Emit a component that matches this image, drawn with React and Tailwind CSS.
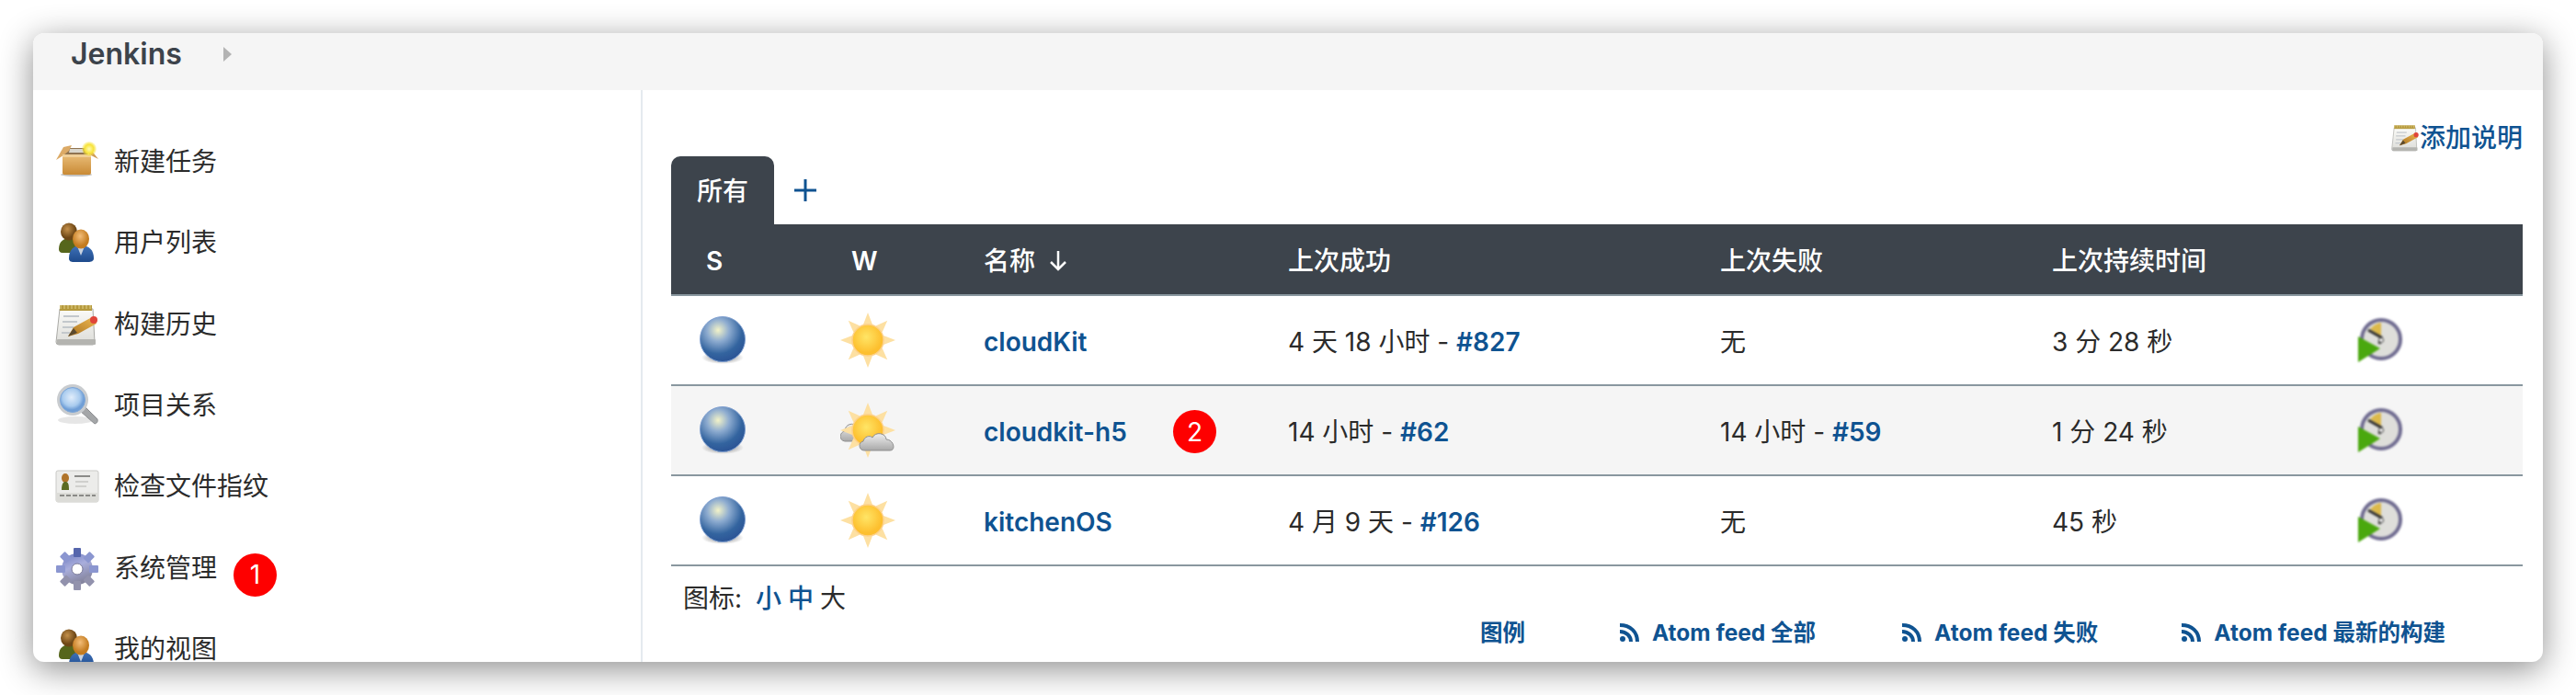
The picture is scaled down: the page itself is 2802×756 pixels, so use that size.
import React from 'react';

const sideItems = [
	{ label: '新建任务', icon: 'box' },
	{ label: '用户列表', icon: 'users' },
	{ label: '构建历史', icon: 'note' },
	{ label: '项目关系', icon: 'search' },
	{ label: '检查文件指纹', icon: 'card' },
	{ label: '系统管理', icon: 'gear', badge: '1' },
	{ label: '我的视图', icon: 'users' },
];

const jobs = [
	{ name: 'cloudKit', weather: 'sun', ok: '4 天 18 小时 - ', okNo: '#827', fail: '无', time: '3 分 28 秒' },
	{ name: 'cloudkit-h5', weather: 'cloud', badge: '2', ok: '14 小时 - ', okNo: '#62', fail: '14 小时 - ', failNo: '#59', time: '1 分 24 秒' },
	{ name: 'kitchenOS', weather: 'sun', ok: '4 月 9 天 - ', okNo: '#126', fail: '无', time: '45 秒' },
];

const BoxIcon = () => (
	<svg viewBox="0 0 48 48" className="w-12 h-12 blur-[0.5px]">
		<defs>
			<linearGradient id="boxFront" x1="0" y1="0" x2="0" y2="1">
				<stop offset="0" stopColor="#e9bd78" />
				<stop offset="1" stopColor="#c98a35" />
			</linearGradient>
			<radialGradient id="boxStar">
				<stop offset="0" stopColor="#fffbb0" />
				<stop offset="0.6" stopColor="#f7e33a" />
				<stop offset="1" stopColor="#f7e33a" stopOpacity="0.2" />
			</radialGradient>
		</defs>
		<ellipse cx="23" cy="37" rx="17" ry="2" fill="#c4c4c4" />
		<path d="M10 8 H34 L36 16 H9 Z" fill="#8f7350" />
		<path d="M16 9 H30 L31 13 H15 Z" fill="#d9d6cc" />
		<path d="M9 7 L18 5 L15 11 L9 16 L1 21 Z" fill="#dcaa66" />
		<path d="M34 7 L38 9 L47 20 L37 15 Z" fill="#cf9c58" />
		<rect x="8" y="15" width="31" height="22" rx="2" fill="url(#boxFront)" />
		<rect x="8" y="15" width="31" height="3" fill="#f0cf98" />
		<circle cx="37" cy="9" r="8" fill="url(#boxStar)" />
	</svg>
);

const UsersIcon = () => (
	<svg viewBox="0 0 48 48" className="w-12 h-12 blur-[0.5px]">
		<defs>
			<radialGradient id="headBrown" cx="0.4" cy="0.35">
				<stop offset="0" stopColor="#c4904a" />
				<stop offset="1" stopColor="#6e4716" />
			</radialGradient>
			<radialGradient id="headOrange" cx="0.45" cy="0.35">
				<stop offset="0" stopColor="#f3bd78" />
				<stop offset="1" stopColor="#c47c20" />
			</radialGradient>
			<linearGradient id="bodyBlue" x1="0" y1="0" x2="0" y2="1">
				<stop offset="0" stopColor="#3f72b8" />
				<stop offset="1" stopColor="#1e4a8c" />
			</linearGradient>
		</defs>
		<path d="M4 30 C4 21 10 18 16 18 C24 18 27 24 27 34 H8 C5 34 4 32 4 30 Z" fill="#56661c" />
		<ellipse cx="15" cy="11" rx="9" ry="9.5" fill="url(#headBrown)" />
		<path d="M15 40 C15 30 21 26 28 26 C37 26 42 31 42 40 C42 43 39 44 36 44 H20 C17 44 15 43 15 40 Z" fill="url(#bodyBlue)" />
		<path d="M24 27 L28 37 L32 27 Z" fill="#c9d3e0" />
		<ellipse cx="28" cy="19" rx="9" ry="10.5" fill="url(#headOrange)" />
	</svg>
);

const NoteIcon = ({ size = 'w-12 h-12' }) => (
	<svg viewBox="0 0 48 48" className={`${size} shrink-0 blur-[0.5px]`}>
		<defs>
			<linearGradient id="notePage" x1="0" y1="0" x2="0" y2="1">
				<stop offset="0" stopColor="#fbfbf8" />
				<stop offset="1" stopColor="#dcdcd8" />
			</linearGradient>
			<linearGradient id="pencilBody" x1="0" y1="1" x2="1" y2="0">
				<stop offset="0" stopColor="#a8701e" />
				<stop offset="1" stopColor="#eeb850" />
			</linearGradient>
		</defs>
		<path d="M5 6 H41 L43 42 Q43 45 41 45 H4 Q1 45 1 42 Z" fill="url(#notePage)" stroke="#a9a9a5" strokeWidth="1" />
		<rect x="2" y="39" width="42" height="6" rx="1" fill="#b4b4b0" />
		<rect x="5" y="2" width="35" height="6" fill="#b69a3e" />
		<path d="M6 2 V6 M10 2 V6 M14 2 V6 M18 2 V6 M22 2 V6 M26 2 V6 M30 2 V6 M34 2 V6 M38 2 V6" stroke="#e1d188" strokeWidth="1" />
		<path d="M9 14 H26 M8 20 H24 M8 26 H20 M7 32 H16" stroke="#c3c8cc" strokeWidth="2" />
		<path d="M14 36 L20 26 L40 15 L45 22 L25 33 Z" fill="url(#pencilBody)" />
		<path d="M14 36 L20 27 L24 32 Z" fill="#5a4a30" />
		<circle cx="42" cy="18" r="4" fill="#e0453a" />
	</svg>
);

const SearchIcon = () => (
	<svg viewBox="0 0 48 48" className="w-12 h-12 blur-[0.5px]">
		<defs>
			<radialGradient id="lens" cx="0.45" cy="0.4">
				<stop offset="0" stopColor="#e1edfb" />
				<stop offset="0.7" stopColor="#a9cbee" />
				<stop offset="1" stopColor="#6f9ed6" />
			</radialGradient>
		</defs>
		<ellipse cx="22" cy="39" rx="19" ry="4" fill="#e6e6e6" />
		<path d="M27 29 L33 25 L46 38 Q47 42 43 43 Z" fill="#a4a6a8" stroke="#8b8d90" strokeWidth="1" />
		<circle cx="19" cy="17" r="17" fill="#c9cccf" />
		<circle cx="19" cy="17" r="13.5" fill="url(#lens)" stroke="#7da6d8" strokeWidth="1" />
	</svg>
);

const CardIcon = () => (
	<svg viewBox="0 0 48 48" className="w-12 h-12 blur-[0.6px]">
		<rect x="1" y="6" width="46" height="34" rx="2" fill="#ececea" stroke="#c9c9c6" strokeWidth="1" />
		<rect x="1" y="30" width="46" height="10" fill="#dcdcd8" />
		<ellipse cx="11" cy="14" rx="4" ry="5" fill="#b0742a" />
		<path d="M7 27 C7 20 9 18 11 18 C14 18 15 20 15 27 Z" fill="#5c6b22" />
		<path d="M21 12 H38" stroke="#8b8b88" strokeWidth="2" />
		<path d="M22 18 H36 M22 23 H34" stroke="#d0d0cd" strokeWidth="2" />
		<path d="M5 33 H44" stroke="#8a8a87" strokeWidth="2" strokeDasharray="5 2" />
	</svg>
);

const GearIcon = () => (
	<svg viewBox="0 0 48 48" className="w-12 h-12 blur-[0.6px]">
		<defs>
			<linearGradient id="gearFill" x1="0" y1="0" x2="0.4" y2="1">
				<stop offset="0" stopColor="#6f7cc0" />
				<stop offset="0.5" stopColor="#a9aedc" />
				<stop offset="1" stopColor="#85859f" />
			</linearGradient>
		</defs>
		<circle cx="24" cy="24" r="17" fill="url(#gearFill)" />
		{[0, 45, 90, 135, 180, 225, 270, 315].map((a) => (
			<rect key={a} x="20" y="1" width="8" height="10" rx="1" fill={a === 0 ? '#5565ac' : a > 90 && a < 270 ? '#9292ad' : '#8b96d0'} transform={`rotate(${a} 24 24)`} />
		))}
		<circle cx="24" cy="24" r="6" fill="#fff" stroke="#7a7a98" strokeWidth="1" />
	</svg>
);

const Ball = () => (
	<svg viewBox="0 0 52 52" className="w-[52px] h-[52px] blur-[0.5px]">
		<defs>
			<radialGradient id="ballFill" cx="0.4" cy="0.3" r="0.7">
				<stop offset="0" stopColor="#f3f3c8" />
				<stop offset="0.35" stopColor="#8eacd0" />
				<stop offset="0.75" stopColor="#33649f" />
				<stop offset="1" stopColor="#2c5596" />
			</radialGradient>
			<radialGradient id="ballShade">
				<stop offset="0" stopColor="#777" />
				<stop offset="1" stopColor="#777" stopOpacity="0" />
			</radialGradient>
		</defs>
		<ellipse cx="26" cy="45" rx="23" ry="7" fill="url(#ballShade)" />
		<circle cx="26" cy="25" r="24.5" fill="url(#ballFill)" stroke="#7f9fd0" strokeWidth="1" />
	</svg>
);

const SunShape = () => (
	<>
		<defs>
			<radialGradient id="sunFill" cx="0.45" cy="0.4">
				<stop offset="0" stopColor="#ffe566" />
				<stop offset="1" stopColor="#fdbf2e" />
			</radialGradient>
		</defs>
		{[0, 45, 90, 135, 180, 225, 270, 315].map((a) => (
			<path key={a} d="M30 0 L35 13 H25 Z" fill="#fde0a2" transform={`rotate(${a} 30 30)`} />
		))}
		<circle cx="30" cy="30" r="17" fill="url(#sunFill)" stroke="#fdd088" strokeWidth="1.5" />
	</>
);

const Sun = () => (
	<svg viewBox="0 0 60 60" className="w-[60px] h-[60px] blur-[0.5px]">
		<SunShape />
	</svg>
);

const SunCloud = () => (
	<svg viewBox="0 0 60 60" className="w-[60px] h-[60px] blur-[0.5px]">
		<defs>
			<linearGradient id="cloudFill" x1="0" y1="0" x2="0" y2="1">
				<stop offset="0" stopColor="#efefef" />
				<stop offset="1" stopColor="#a8a8a8" />
			</linearGradient>
		</defs>
		<path d="M5 42 C-2 41 -1 32 5 31 C5 23 14 21 19 26 L21 42 Z" fill="url(#cloudFill)" stroke="#8f8f8f" strokeWidth="1" />
		<SunShape />
		<path d="M26 52 C20 52 19 43 25 42 C26 37 32 35 35 38 C38 31 50 33 50 40 C58 40 61 52 54 52 Z" fill="url(#cloudFill)" stroke="#8f8f8f" strokeWidth="1" />
	</svg>
);

const ClockPlay = () => (
	<svg viewBox="0 0 48 48" className="w-12 h-12 blur-[0.8px]">
		<circle cx="25" cy="23" r="21" fill="#dededa" stroke="#6f6b90" strokeWidth="4" />
		<path d="M25 5 V20 L13 12 Q18 6 25 5 Z" fill="#dcb94a" />
		<path d="M11 13 L25 21 L23 28" fill="none" stroke="#2f2f2f" strokeWidth="3" />
		<circle cx="25" cy="24" r="2.5" fill="#fff" stroke="#333" strokeWidth="1" />
		<path d="M0 20 L24 33 L0 48 Z" fill="#4aa80e" />
	</svg>
);

const RssIcon = () => (
	<svg viewBox="0 0 22 20" className="w-[22px] h-5 shrink-0" fill="none" stroke="currentColor" strokeWidth="4">
		<circle cx="3" cy="17" r="3" fill="currentColor" stroke="none" />
		<path d="M0 9 C7 9 12 14 12 20" />
		<path d="M0 2 C11 2 19 9 19 20" />
	</svg>
);

const sideIcons = {
	box: BoxIcon,
	users: UsersIcon,
	note: NoteIcon,
	search: SearchIcon,
	card: CardIcon,
	gear: GearIcon,
};

const Badge = ({ children, className }) => (
	<span className={`absolute w-[47px] h-[47px] rounded-full bg-[#fe0000] text-white flex items-center justify-center text-[28px] leading-none ${className}`}>
		{children}
	</span>
);

const rowCols = 'grid grid-cols-[140px_200px_331px_470px_361px_333px_1fr] items-center';

const App = () => {
	return (
		<div className="w-[2802px] h-[756px] bg-white pt-9 pl-9 overflow-hidden [font-family:Inter,'Noto_Sans_CJK_SC',sans-serif] text-[#2b2b2b]">
			<div className="w-[2730px] h-[684px] rounded-[12px] overflow-hidden flex flex-col bg-white shadow-[0_8px_36px_rgba(0,0,0,0.45)]">
				<header className="h-[62px] shrink-0 bg-[#f5f5f5] flex items-center pl-[41px] pb-4">
					<span className="text-[32px] font-semibold text-[#3c434b] leading-none">Jenkins</span>
					<span className="ml-[45px] w-0 h-0 border-y-[8px] border-y-transparent border-l-[9px] border-l-[#b3b3b3]"></span>
				</header>

				<div className="flex flex-1 min-h-0">
					<aside className="w-[663px] shrink-0 border-r-2 border-[#e5eaef] pt-[35px]">
						{sideItems.map((item) => {
							const Icon = sideIcons[item.icon];
							return (
								<div key={item.label} className="relative h-[88.33px] flex items-center pl-6 gap-4 text-[28px]">
									<Icon />
									<span className="pb-[2px]">{item.label}</span>
									{item.badge && <Badge className="left-[218px] top-[27px]">{item.badge}</Badge>}
								</div>
							);
						})}
					</aside>

					<main className="flex-1 min-w-0 pl-[31px] pr-[22px] pt-9">
						<div className="h-8 mb-1 flex justify-end items-center text-[28px] font-medium text-[#0f5391]">
							<NoteIcon size="w-[31px] h-[31px]" />
							<span>添加说明</span>
						</div>

						<div className="flex items-center">
							<div className="w-[112px] h-[74px] bg-[#3d444c] rounded-t-[10px] text-white text-[28px] font-medium flex justify-center pt-5 leading-9">所有</div>
							<svg viewBox="0 0 24 24" className="ml-[22px] w-6 h-6 text-[#0f5391]" fill="none" stroke="currentColor" strokeWidth="3">
								<path d="M12 0 V24 M0 12 H24" />
							</svg>
						</div>

						<div className={`${rowCols} h-[78px] bg-[#3d444c] border-b-2 border-[#89979f] text-white text-[28px] font-medium`}>
							<span className="pl-[38px] pt-[3px] font-semibold">S</span>
							<span className="pl-[56px] pt-[3px] font-semibold">W</span>
							<span className="flex items-center gap-4 pt-[3px]">
								名称
								<svg viewBox="0 0 18 22" className="w-[18px] h-[22px]" fill="none" stroke="currentColor" strokeWidth="2.5">
									<path d="M9 0 V20 M1 12 L9 20 L17 12" />
								</svg>
							</span>
							<span className="pt-[3px]">上次成功</span>
							<span className="pt-[3px]">上次失败</span>
							<span className="pt-[3px]">上次持续时间</span>
							<span></span>
						</div>

						{jobs.map((job, i) => (
							<div key={job.name} className={`${rowCols} relative h-[98px] border-b-2 border-[#89979f] text-[28px] ${i === 1 ? 'bg-[#f5f5f5]' : 'bg-white'}`}>
								<span className="pl-[30px]"><Ball /></span>
								<span className="pl-[44px]">{job.weather === 'sun' ? <Sun /> : <SunCloud />}</span>
								<a className="font-semibold text-[#0f5391] pt-[3px]">{job.name}</a>
								<span className="pt-[3px]">{job.ok}<a className="font-semibold text-[#0f5391]">{job.okNo}</a></span>
								<span className="pt-[3px]">{job.fail}{job.failNo && <a className="font-semibold text-[#0f5391]">{job.failNo}</a>}</span>
								<span className="pt-[3px]">{job.time}</span>
								<span><ClockPlay /></span>
								{job.badge && <Badge className="left-[546px] top-[26px]">{job.badge}</Badge>}
							</div>
						))}

						<div className="h-[52px] pt-[17px] pl-[13px] flex gap-[7px] text-[28px] leading-9">
							<span className="mr-2">图标:</span>
							<a className="font-medium text-[#0f5391]">小</a>
							<a className="font-medium text-[#0f5391]">中</a>
							<span>大</span>
						</div>

						<div className="h-10 flex justify-end items-center pr-[84px] text-[24.5px] font-bold text-[#0f5391]">
							<a className="mr-[103px]">图例</a>
							<a className="flex items-center gap-[13px] mr-[94px]"><RssIcon />Atom feed 全部</a>
							<a className="flex items-center gap-[13px] mr-[91px]"><RssIcon />Atom feed 失败</a>
							<a className="flex items-center gap-[13px]"><RssIcon />Atom feed 最新的构建</a>
						</div>
					</main>
				</div>
			</div>
		</div>
	);
};

export default App;
